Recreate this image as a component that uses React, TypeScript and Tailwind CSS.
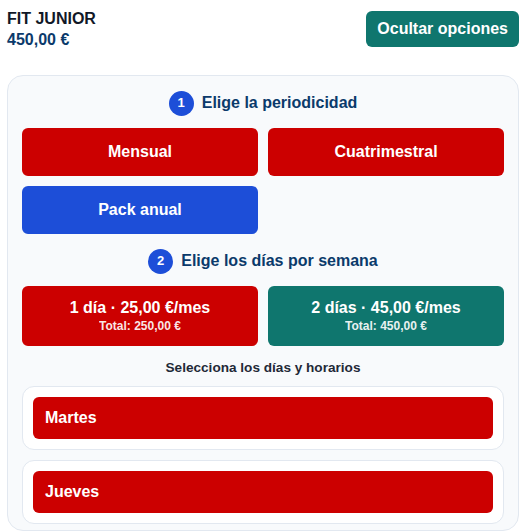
import React from "react";

const font = { fontFamily: '"Liberation Sans", Arial, sans-serif' };

function StepHeading({ n, text }: { n: number; text: string }) {
  return (
    <div className="flex items-center justify-center gap-2 h-[26px]">
      <div className="w-[25px] h-[25px] rounded-full bg-[#1d4ed8] text-white text-[13px] font-bold flex items-center justify-center">
        {n}
      </div>
      <div className="text-[16px] font-bold text-[#0b3a6b]">{text}</div>
    </div>
  );
}

function DayCard({ day }: { day: string }) {
  return (
    <div className="bg-white border border-[#e2e8f0] rounded-xl p-[10px]">
      <div className="h-[42px] rounded-md bg-[#cc0000] text-white text-[16px] font-bold flex items-center px-3">
        {day}
      </div>
    </div>
  );
}

export default function App() {
  return (
    <div className="min-h-[532px] bg-white pl-[7px] pr-2 pt-2" style={font}>
      <div className="flex items-center justify-between">
        <div className="leading-[21px]">
          <div className="text-[16px] font-bold text-[#111827]">FIT JUNIOR</div>
          <div className="text-[16px] font-bold text-[#0b3a6b]">450,00 €</div>
        </div>
        <button className="h-[36px] px-[11px] rounded-md bg-[#0f766e] text-white text-[16px] font-bold">
          Ocultar opciones
        </button>
      </div>

      <div className="mt-[25px] border border-[#e2e8f0] bg-[#f8fafc] rounded-2xl px-[14px] pt-[14px] pb-[6px]">
        <StepHeading n={1} text="Elige la periodicidad" />
        <div className="mt-3 grid grid-cols-2 gap-[10px]">
          <button className="h-[48px] rounded-md bg-[#cc0000] text-white text-[16px] font-bold">Mensual</button>
          <button className="h-[48px] rounded-md bg-[#cc0000] text-white text-[16px] font-bold">Cuatrimestral</button>
          <button className="h-[48px] rounded-md bg-[#1d4ed8] text-white text-[16px] font-bold">Pack anual</button>
        </div>

        <div className="mt-[14px]">
          <StepHeading n={2} text="Elige los días por semana" />
        </div>
        <div className="mt-3 grid grid-cols-2 gap-[10px]">
          <button className="h-[60px] rounded-md bg-[#cc0000] text-white flex flex-col items-center justify-center">
            <span className="text-[16px] font-bold leading-[20px]">1 día · 25,00 €/mes</span>
            <span className="text-[12px] font-bold leading-[16px] opacity-90">Total: 250,00 €</span>
          </button>
          <button className="h-[60px] rounded-md bg-[#0f766e] text-white flex flex-col items-center justify-center">
            <span className="text-[16px] font-bold leading-[20px]">2 días · 45,00 €/mes</span>
            <span className="text-[12px] font-bold leading-[16px] opacity-90">Total: 450,00 €</span>
          </button>
        </div>

        <div className="mt-3 text-center text-[13.6px] leading-[20px] font-bold text-[#1f2937]">
          Selecciona los días y horarios
        </div>

        <div className="mt-2 flex flex-col gap-[10px]">
          <DayCard day="Martes" />
          <DayCard day="Jueves" />
        </div>
      </div>
    </div>
  );
}
